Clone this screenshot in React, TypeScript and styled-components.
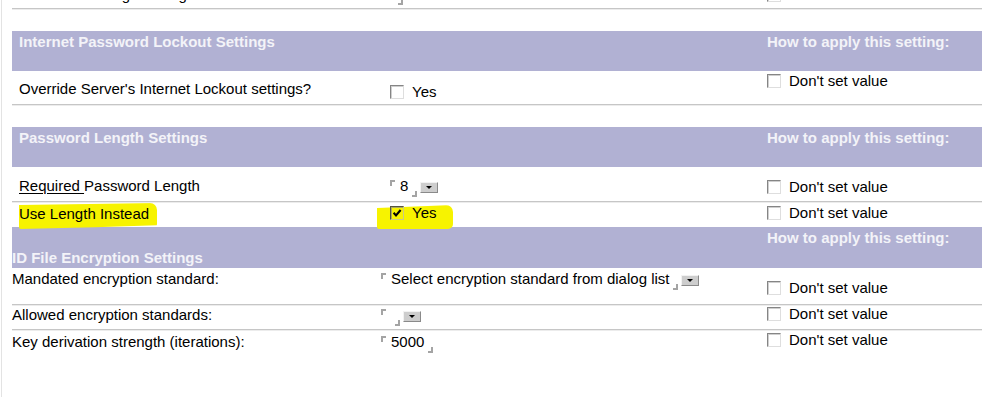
import React from "react";
import styled, { createGlobalStyle } from "styled-components";

const GlobalStyle = createGlobalStyle`
  html, body {
    margin: 0;
    padding: 0;
    background: #fff;
  }
  body {
    font-family: "Liberation Sans", Arial, sans-serif;
    font-size: 15px;
    color: #000;
    overflow: hidden;
  }
`;

const COLS = "369px 379px 1fr";

const Page = styled.div`
  width: 981px;
  height: 397px;
  margin-left: 1px;
  border-left: 1px solid #e3e3e3;
  padding-left: 10px;
  box-sizing: border-box;
  overflow: hidden;
`;

const Form = styled.div`
  display: flex;
  flex-direction: column;
  margin-top: -15px;
`;

const SectionHeader = styled.div<{ $height: number; $gap?: number }>`
  display: grid;
  grid-template-columns: ${COLS};
  height: ${(p) => p.$height}px;
  margin-top: ${(p) => p.$gap ?? 0}px;
  background: #b1b1d3;
  color: #f3f3f8;
  font-weight: bold;
  line-height: 17px;
  white-space: nowrap;
`;

const SectionTitle = styled.div<{ $bottom?: boolean }>`
  grid-column: 1 / 3;
  align-self: ${(p) => (p.$bottom ? "end" : "start")};
  padding: ${(p) => (p.$bottom ? "0 0 2px 0" : "2px 0 0 7px")};
`;

const ApplyTitle = styled.div`
  grid-column: 3;
  align-self: start;
  padding: 2px 0 0 7px;
`;

const Row = styled.div<{ $height: number; $rule?: boolean; $raised?: boolean }>`
  display: grid;
  grid-template-columns: ${COLS};
  height: ${(p) => p.$height}px;
  border-bottom: ${(p) => (p.$rule ? "1px solid #c6c6c6" : "none")};
  box-shadow: ${(p) => (p.$rule ? "0 1px 0 #ececec" : "none")};
  position: relative;
  z-index: ${(p) => (p.$raised ? 1 : "auto")};
`;

const Label = styled.div<{ $pt: number; $flush?: boolean }>`
  padding: ${(p) => p.$pt}px 0 0 ${(p) => (p.$flush ? 0 : 7)}px;
  line-height: 17px;
  white-space: nowrap;
`;

const Value = styled.div<{ $pt: number; $flush?: boolean }>`
  display: flex;
  align-items: flex-start;
  padding: ${(p) => p.$pt}px 0 0 ${(p) => (p.$flush ? 0 : 9)}px;
  line-height: 17px;
  white-space: nowrap;
`;

const Apply = styled.div<{ $pt: number }>`
  display: flex;
  align-items: flex-start;
  padding: ${(p) => p.$pt}px 0 0 7px;
  line-height: 17px;
  white-space: nowrap;
`;

const Underlined = styled.span`
  text-decoration: underline;
  text-underline-offset: 2px;
`;

const Option = styled.label`
  display: flex;
  align-items: center;
  gap: 8px;
  line-height: 17px;
`;

const Box = styled.span<{ $checked?: boolean }>`
  flex: none;
  width: 14px;
  height: 14px;
  box-sizing: border-box;
  border: 1px solid;
  border-color: ${(p) =>
    p.$checked ? "#55553f #c9c98a #c9c98a #55553f" : "#858585 #dedede #dedede #858585"};
  background: ${(p) => (p.$checked ? "transparent" : "#fff")};
  box-shadow: inset 1px 1px 0 ${(p) => (p.$checked ? "#a9a860" : "#cfcfcf")};
  display: flex;
  align-items: center;
  justify-content: center;
`;

const Field = styled.span<{ $gap?: number }>`
  display: flex;
  align-items: flex-start;
  height: 20px;
  line-height: 17px;
  column-gap: ${(p) => p.$gap ?? 0}px;
`;

const CornerOpen = styled.span`
  flex: none;
  width: 5px;
  height: 6px;
  margin: 3px 5px 0 0;
  box-sizing: border-box;
  border-top: 2px solid #a4a4a4;
  border-left: 2px solid #a4a4a4;
`;

const CornerClose = styled.span`
  flex: none;
  align-self: flex-end;
  width: 5px;
  height: 6px;
  margin-left: 4px;
  box-sizing: border-box;
  border-right: 2px solid #a4a4a4;
  border-bottom: 2px solid #a4a4a4;
`;

const DropButton = styled.span`
  flex: none;
  align-self: flex-end;
  width: 18px;
  height: 11px;
  margin: 0 0 4px 3px;
  box-sizing: border-box;
  background: #cdcdcd;
  border: 1px solid;
  border-color: #f2f2f2 #8a8a8a #8a8a8a #f2f2f2;
  display: flex;
  align-items: center;
  justify-content: center;

  &::after {
    content: "";
    border-left: 3px solid transparent;
    border-right: 3px solid transparent;
    border-top: 3px solid #000;
  }
`;

const Marker = styled.span<{ $left: number; $top: number; $width: number; $height: number; $slant?: boolean }>`
  position: absolute;
  left: ${(p) => p.$left}px;
  top: ${(p) => p.$top}px;
  width: ${(p) => p.$width}px;
  height: ${(p) => p.$height}px;
  z-index: -1;
  background: #f7f300;
  border-radius: 2px 7px 5px 2px;
  clip-path: ${(p) =>
    p.$slant
      ? "polygon(0 2px, 100% 0, 100% 86%, 55% 93%, 0 100%)"
      : "polygon(0 3px, 100% 0, 100% 100%, 0 100%)"};
  pointer-events: none;
`;

type CheckProps = { text?: string; checked?: boolean };

const Check = ({ text, checked }: CheckProps) => (
  <Option>
    <Box $checked={checked}>
      {checked && (
        <svg width="10" height="10" viewBox="0 0 10 10">
          <path d="M1.6 4.8 L4 7.4 L8.6 2" fill="none" stroke="#000" strokeWidth="2.1" />
        </svg>
      )}
    </Box>
    {text}
  </Option>
);

type EntryProps = { value?: string; list?: boolean; gap?: number };

const Entry = ({ value, list, gap }: EntryProps) => (
  <Field $gap={gap}>
    <CornerOpen />
    {value && <span>{value}</span>}
    <CornerClose />
    {list && <DropButton />}
  </Field>
);

const APPLY = "Don't set value";

export default function App() {
  return (
    <>
      <GlobalStyle />
      <Page>
        <Form>
          <Row $height={23} $rule>
            <Label $pt={1}>Custom Warning Message</Label>
            <Value $pt={-2}>
              <Entry gap={3} />
            </Value>
            <Apply $pt={3}>
              <Check />
            </Apply>
          </Row>

          <SectionHeader $height={40} $gap={22}>
            <SectionTitle>Internet Password Lockout Settings</SectionTitle>
            <ApplyTitle>How to apply this setting:</ApplyTitle>
          </SectionHeader>
          <Row $height={33} $rule>
            <Label $pt={9}>Override Server's Internet Lockout settings?</Label>
            <Value $pt={12}>
              <Check text="Yes" />
            </Value>
            <Apply $pt={1}>
              <Check text={APPLY} />
            </Apply>
          </Row>

          <SectionHeader $height={40} $gap={22}>
            <SectionTitle>Password Length Settings</SectionTitle>
            <ApplyTitle>How to apply this setting:</ApplyTitle>
          </SectionHeader>
          <Row $height={34} $rule>
            <Label $pt={10}>
              <Underlined>Required </Underlined>Password Length
            </Label>
            <Value $pt={10}>
              <Entry value="8" list />
            </Value>
            <Apply $pt={11}>
              <Check text={APPLY} />
            </Apply>
          </Row>
          <Row $height={25} $raised>
            <Marker $left={7} $top={1} $width={138} $height={26} $slant />
            <Marker $left={365} $top={3} $width={76} $height={24} />
            <Label $pt={3}>Use Length Instead</Label>
            <Value $pt={2}>
              <Check text="Yes" checked />
            </Value>
            <Apply $pt={2}>
              <Check text={APPLY} />
            </Apply>
          </Row>

          <SectionHeader $height={41}>
            <SectionTitle $bottom>ID File Encryption Settings</SectionTitle>
            <ApplyTitle>How to apply this setting:</ApplyTitle>
          </SectionHeader>
          <Row $height={36} $rule>
            <Label $pt={2} $flush>
              Mandated encryption standard:
            </Label>
            <Value $pt={2} $flush>
              <Entry value="Select encryption standard from dialog list" list />
            </Value>
            <Apply $pt={11}>
              <Check text={APPLY} />
            </Apply>
          </Row>
          <Row $height={24} $rule>
            <Label $pt={1} $flush>
              Allowed encryption standards:
            </Label>
            <Value $pt={1} $flush>
              <Entry list />
            </Value>
            <Apply $pt={0}>
              <Check text={APPLY} />
            </Apply>
          </Row>
          <Row $height={24}>
            <Label $pt={3} $flush>
              Key derivation strength (iterations):
            </Label>
            <Value $pt={3} $flush>
              <Entry value="5000" />
            </Value>
            <Apply $pt={1}>
              <Check text={APPLY} />
            </Apply>
          </Row>
        </Form>
      </Page>
    </>
  );
}
